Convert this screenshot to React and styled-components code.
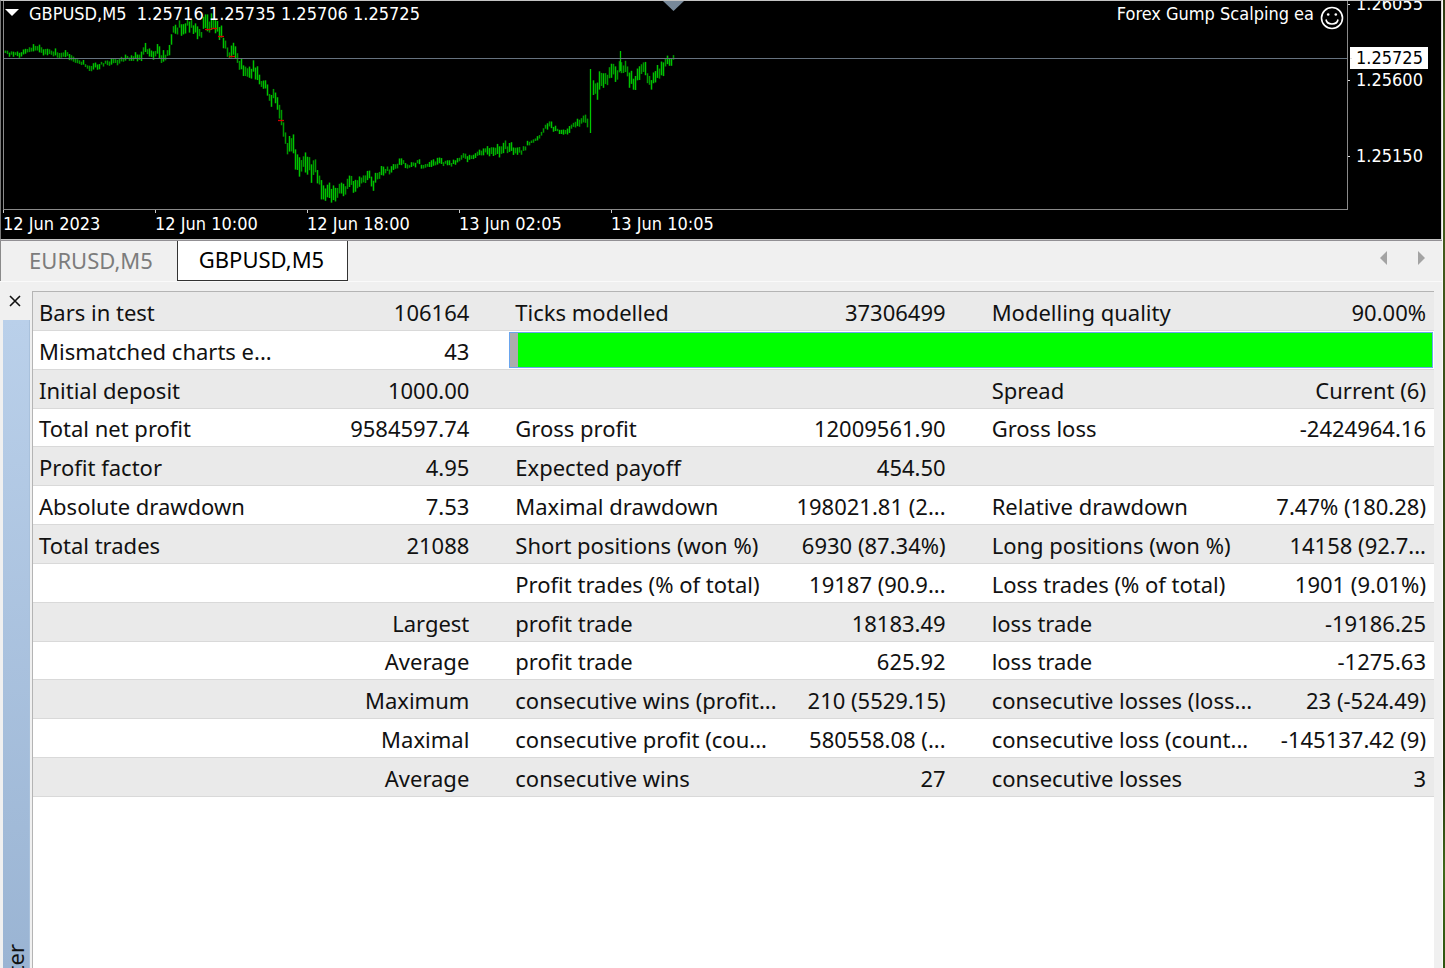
import React from "react";
import styled, { createGlobalStyle, css } from "styled-components";

const GlobalStyle = createGlobalStyle`
  * { box-sizing: border-box; }
  body { margin: 0; background: #f0f0f0; }
  button { font: inherit; border: 0; padding: 0; margin: 0; background: none; }
`;

const chartFont = '"DejaVu Sans Condensed", "DejaVu Sans", sans-serif';
const uiFont = '"Noto Sans", "Open Sans", sans-serif';

const Page = styled.div`
  display: flex;
  height: 100vh;
  overflow: hidden;
  font-family: ${uiFont};
  font-size: 22px;
  color: #111;
`;

const Window = styled.main`
  flex: 1;
  min-width: 0;
  display: flex;
  flex-direction: column;
  background: #f0f0f0;
  border-right: 1px solid #fafafa;
`;

const DesktopEdge = styled.div`
  width: 2px;
  background: linear-gradient(#2c3a14, #4b6620 10%, #26330f 80%, #41691a 90%, #2e5510);
`;

/* ---- chart ---- */

const ChartPanel = styled.section`
  flex: none;
  display: grid;
  grid-template-columns: minmax(0, 1fr) 93px;
  grid-template-rows: 209px 29px;
  background: #000;
  color: #fff;
  font-family: ${chartFont};
  font-size: 18px;
  line-height: 22px;
  border: 1px solid #c4c4c4;
  border-right: 1px solid #d8d8d8;
  border-left-color: #777;
  padding-left: 2px;
  overflow: hidden;
`;

const Plot = styled.div`
  position: relative;
  border: 1px solid #8a8a8a;
  border-top: 0;
`;

const PlotSvg = styled.svg`
  display: block;
  width: 100%;
  height: 100%;
`;

const PlotHeader = styled.header`
  position: absolute;
  inset: 0 0 auto 0;
  display: flex;
  align-items: flex-start;
  padding: 2px 3px 0 1px;
  white-space: pre;
`;

const MenuButton = styled.button`
  display: flex;
  width: 22px;
  height: 22px;
  padding-top: 6px;
`;

const Quotes = styled.span`
  flex: 1;
  padding-left: 2px;
`;

const ExpertName = styled.span`
  display: flex;
  align-items: flex-start;
  gap: 6px;
  svg { margin-top: 3px; }
`;

const PriceAxis = styled.div`
  display: flex;
  flex-direction: column;
  align-items: flex-start;
`;

const Price = styled.div`
  flex: none;
  display: flex;
  align-items: center;
  gap: 6px;
  height: 22px;
  margin-top: ${(p) => p.$space || 0}px;
  &::before { content: ""; width: 2px; height: 1px; background: #ddd; }
  ${(p) => p.$current && css`
    color: #000;
    background: #fff;
    margin-left: 2px;
    padding-right: 5px;
    gap: 4px;
  `}
`;

const TimeAxis = styled.div`
  display: flex;
`;

const Time = styled.div`
  width: 152px;
  white-space: nowrap;
  &::before { content: ""; display: block; width: 1px; height: 3px; background: #ccc; }
`;

/* ---- chart tabs ---- */

const TabBar = styled.nav`
  flex: none;
  display: flex;
  height: 42px;
  border-top: 1px solid #929094;
  border-bottom: 1px solid #fafafa;
`;

const Tab = styled.button`
  width: ${(p) => (p.$active ? 171 : 177)}px;
  height: 40px;
  line-height: 30px;
  color: ${(p) => (p.$active ? "#000" : "#7c7c7c")};
  background: ${(p) => (p.$active ? "#fff" : "transparent")};
  border: solid ${(p) => (p.$active ? "#333" : "#8a8a8a")};
  border-width: ${(p) => (p.$active ? "0 1px 1px" : "0 0 0 1px")};
  padding: 0 ${(p) => (p.$active ? 2 : 0)}px 3px ${(p) => (p.$active ? 0 : 4)}px;
`;

const TabArrows = styled.div`
  margin-left: auto;
  display: flex;
  gap: 29px;
  padding: 10px 17px 0 0;
`;

const ArrowButton = styled.button`
  display: flex;
  height: 14px;
`;

/* ---- tester ---- */

const Tester = styled.section`
  flex: 1;
  min-height: 0;
  display: flex;
  padding: 9px 8px 0 3px;
`;

const SideBar = styled.aside`
  flex: none;
  width: 27px;
  display: flex;
  flex-direction: column;
`;

const CloseButton = styled.button`
  display: flex;
  justify-content: center;
  height: 29px;
  padding: 4px 4px 0 0;
`;

const SideTitle = styled.div`
  flex: 1;
  min-height: 0;
  display: flex;
  flex-direction: column;
  justify-content: flex-end;
  background: linear-gradient(#bad0ea, #9ab4d3);
  border-right: 1px solid #a9c1dc;
`;

const SideText = styled.div`
  height: 24px;
  overflow: hidden;
  line-height: 24px;
  span {
    display: block;
    writing-mode: vertical-rl;
    transform: rotate(180deg);
  }
`;

const Report = styled.div`
  flex: 1;
  min-width: 0;
  margin-left: 2px;
  background: #fff;
  border-top: 1px solid #b4b4b4;
  border-left: 1px solid #b4b4b4;
`;

const Table = styled.table`
  width: 100%;
  height: 505px;
  table-layout: fixed;
  border-collapse: collapse;
  line-height: 34px;
`;

const Row = styled.tr`
  border-bottom: 1px solid #d9d9d9;
  &:nth-child(odd) { background: #eaeaea; }
`;

const Cell = styled.td`
  padding: 2px 0 0 6px;
  white-space: nowrap;
  overflow: hidden;
`;

const Value = styled(Cell)`
  padding: 2px ${(p) => (p.$last ? 8 : 40)}px 0 0;
  text-align: right;
`;

const QualityCell = styled.td`
  padding: 0 1px 0 0;
`;

const Quality = styled.div`
  height: 36px;
  background: #0f0;
  border: 1px solid #6aa5ee;
  &::before {
    content: "";
    display: block;
    width: 8px;
    height: 100%;
    background: #acacac;
  }
`;

/* x, centre, half range of the price bars along the session */
const path = [
  [0, 52, 2], [17, 53, 2], [33, 46, 3], [39, 51, 3], [46, 50, 3], [54, 54, 3], [66, 55, 3],
  [71, 60, 3], [81, 63, 2], [87, 69, 3], [97, 63, 2], [112, 61, 3], [127, 57, 2], [137, 55, 4],
  [142, 49, 4], [149, 56, 3], [154, 48, 5], [158, 57, 5], [164, 54, 4], [167, 43, 5], [169, 29, 6],
  [173, 31, 3], [176, 25, 5], [180, 30, 4], [183, 22, 5], [189, 27, 4], [194, 30, 5], [198, 33, 4],
  [201, 19, 7], [206, 22, 7], [210, 22, 6], [215, 28, 5], [219, 36, 5], [223, 48, 5], [227, 54, 5],
  [231, 49, 5], [235, 60, 6], [240, 69, 5], [245, 74, 5], [250, 67, 5], [253, 71, 6], [256, 82, 4],
  [263, 86, 4], [267, 98, 6], [271, 91, 5], [275, 107, 7], [279, 122, 9], [283, 146, 6],
  [286, 139, 8], [289, 144, 9], [293, 162, 8], [299, 160, 7], [304, 169, 9], [310, 167, 8],
  [315, 175, 6], [318, 188, 8], [321, 199, 5], [326, 189, 7], [330, 196, 6], [335, 189, 6],
  [341, 189, 5], [347, 182, 6], [353, 186, 5], [357, 181, 4], [365, 173, 4], [370, 182, 4],
  [375, 173, 4], [387, 168, 3], [397, 162, 3], [407, 165, 2], [416, 161, 2], [419, 166, 2],
  [434, 161, 3], [447, 163, 2], [454, 160, 2], [461, 155, 3], [466, 157, 2], [473, 155, 2],
  [477, 150, 3], [494, 149, 4], [500, 147, 5], [510, 147, 3], [517, 151, 3], [524, 144, 2],
  [537, 135, 2], [542, 127, 3], [547, 123, 3], [553, 130, 2], [560, 132, 2], [569, 126, 3],
  [577, 122, 4], [581, 117, 4], [585, 127, 6], [589, 80, 6], [593, 90, 7], [597, 80, 8],
  [602, 78, 6], [610, 72, 7], [615, 69, 6], [621, 65, 6], [626, 77, 6], [630, 83, 5],
  [635, 72, 6], [641, 69, 6], [648, 80, 5], [653, 73, 5], [660, 69, 6], [664, 60, 4], [670, 59, 3],
];

function noise(seed) {
  const n = Math.sin(seed) * 43758.5453;
  return n - Math.floor(n);
}

function priceBars() {
  const result = [];
  let k = 0;
  for (let x = 0; x <= 670; x += 2) {
    while (path[k + 1][0] < x) k += 1;
    const [x0, y0, h0] = path[k];
    const [x1, y1, h1] = path[k + 1];
    const t = (x - x0) / (x1 - x0);
    const r = noise(x * 12.9898);
    const half = (h0 + (h1 - h0) * t) * (0.6 + r * 0.7);
    const mid = y0 + (y1 - y0) * t + (noise(x * 78.233) - 0.5) * h0 * 1.4;
    if (x !== 586 && x !== 588) {
      result.push({ x, top: mid - half, bottom: mid + half, bright: r > 0.5 });
    }
  }
  return result;
}

const bars = priceBars();
const trades = [[204, 28], [210, 27], [217, 35], [228, 55], [277, 119]];

const rows = [
  ["Bars in test", "106164", "Ticks modelled", "37306499", "Modelling quality", "90.00%"],
  ["Mismatched charts e...", "43", null],
  ["Initial deposit", "1000.00", "", "", "Spread", "Current (6)"],
  ["Total net profit", "9584597.74", "Gross profit", "12009561.90", "Gross loss", "-2424964.16"],
  ["Profit factor", "4.95", "Expected payoff", "454.50", "", ""],
  ["Absolute drawdown", "7.53", "Maximal drawdown", "198021.81 (2...", "Relative drawdown", "7.47% (180.28)"],
  ["Total trades", "21088", "Short positions (won %)", "6930 (87.34%)", "Long positions (won %)", "14158 (92.7..."],
  ["", "", "Profit trades (% of total)", "19187 (90.9...", "Loss trades (% of total)", "1901 (9.01%)"],
  ["", "Largest", "profit trade", "18183.49", "loss trade", "-19186.25"],
  ["", "Average", "profit trade", "625.92", "loss trade", "-1275.63"],
  ["", "Maximum", "consecutive wins (profit...", "210 (5529.15)", "consecutive losses (loss...", "23 (-524.49)"],
  ["", "Maximal", "consecutive profit (cou...", "580558.08 (...", "consecutive loss (count...", "-145137.42 (9)"],
  ["", "Average", "consecutive wins", "27", "consecutive losses", "3"],
];

function Chart() {
  return (
    <ChartPanel>
      <Plot>
        <PlotSvg aria-label="GBPUSD price chart">
          <g transform="translate(-1 0)">
            <path d="M660 0h21l-10.500 10z" fill="#778899" />
            {bars.map((b) => (
              <line key={b.x} x1={b.x + 0.5} x2={b.x + 0.5} y1={b.top} y2={b.bottom}
                stroke={b.bright ? "#00c400" : "#009800"} strokeWidth="1.5" />
            ))}
            <path d="M587.500 68V132M617.500 50V70" stroke="#00c800" strokeWidth="1.3" />
            {trades.map(([x, y]) => (
              <path key={x} d={`M${x - 2} ${y + 0.5}h6`} stroke="#d40000" strokeWidth="1.3" />
            ))}
          </g>
          <line x1="0" x2="100%" y1="57.500" y2="57.500" stroke="#66727f" />
        </PlotSvg>
        <PlotHeader>
          <MenuButton aria-label="Chart menu">
            <svg width="14" height="8"><path d="M0 0h14L7 7z" fill="#fff" /></svg>
          </MenuButton>
          <Quotes>GBPUSD,M5&nbsp; 1.25716 1.25735 1.25706 1.25725</Quotes>
          <ExpertName>
            Forex Gump Scalping ea
            <svg width="24" height="24" viewBox="0 0 24 24" fill="none" stroke="#fff" strokeWidth="1.600">
              <circle cx="12" cy="12" r="10.500" />
              <path d="M6 13.500c1 6 11 6 12 0" />
              <circle cx="8.200" cy="8.500" r="1.300" fill="#fff" stroke="none" />
              <circle cx="15.800" cy="8.500" r="1.300" fill="#fff" stroke="none" />
            </svg>
          </ExpertName>
        </PlotHeader>
      </Plot>
      <PriceAxis>
        <Price $space={-8}>1.26055</Price>
        <Price $space={32} $current>1.25725</Price>
        <Price>1.25600</Price>
        <Price $space={54}>1.25150</Price>
      </PriceAxis>
      <TimeAxis>
        {["12 Jun 2023", "12 Jun 10:00", "12 Jun 18:00", "13 Jun 02:05", "13 Jun 10:05"].map((t) => (
          <Time key={t}>{t}</Time>
        ))}
      </TimeAxis>
    </ChartPanel>
  );
}

export default function App() {
  return (
    <Page>
      <GlobalStyle />
      <Window>
        <Chart />
        <TabBar>
          <Tab>EURUSD,M5</Tab>
          <Tab $active>GBPUSD,M5</Tab>
          <TabArrows>
            <ArrowButton aria-label="Previous tab">
              <svg width="8" height="14"><path d="M7 0v14L0 7z" fill="#a3a3a3" /></svg>
            </ArrowButton>
            <ArrowButton aria-label="Next tab">
              <svg width="8" height="14"><path d="M1 0v14l7-7z" fill="#a3a3a3" /></svg>
            </ArrowButton>
          </TabArrows>
        </TabBar>
        <Tester>
          <SideBar>
            <CloseButton aria-label="Close">
              <svg width="12" height="12"><path d="M1 1l10 10M11 1L1 11" stroke="#111" strokeWidth="1.600" /></svg>
            </CloseButton>
            <SideTitle>
              <SideText><span>Tester</span></SideText>
            </SideTitle>
          </SideBar>
          <Report>
            <Table>
              <colgroup>
                <col style={{ width: "20%" }} />
                <col style={{ width: "14%" }} />
                <col style={{ width: "20%" }} />
                <col style={{ width: "14%" }} />
                <col style={{ width: "19%" }} />
                <col style={{ width: "13%" }} />
              </colgroup>
              <tbody>
                {rows.map((r, i) => (
                  <Row key={i}>
                    <Cell>{r[0]}</Cell>
                    <Value>{r[1]}</Value>
                    {r[2] === null ? (
                      <QualityCell colSpan={4}><Quality /></QualityCell>
                    ) : (
                      <>
                        <Cell>{r[2]}</Cell>
                        <Value>{r[3]}</Value>
                        <Cell>{r[4]}</Cell>
                        <Value $last>{r[5]}</Value>
                      </>
                    )}
                  </Row>
                ))}
              </tbody>
            </Table>
          </Report>
        </Tester>
      </Window>
      <DesktopEdge />
    </Page>
  );
}
